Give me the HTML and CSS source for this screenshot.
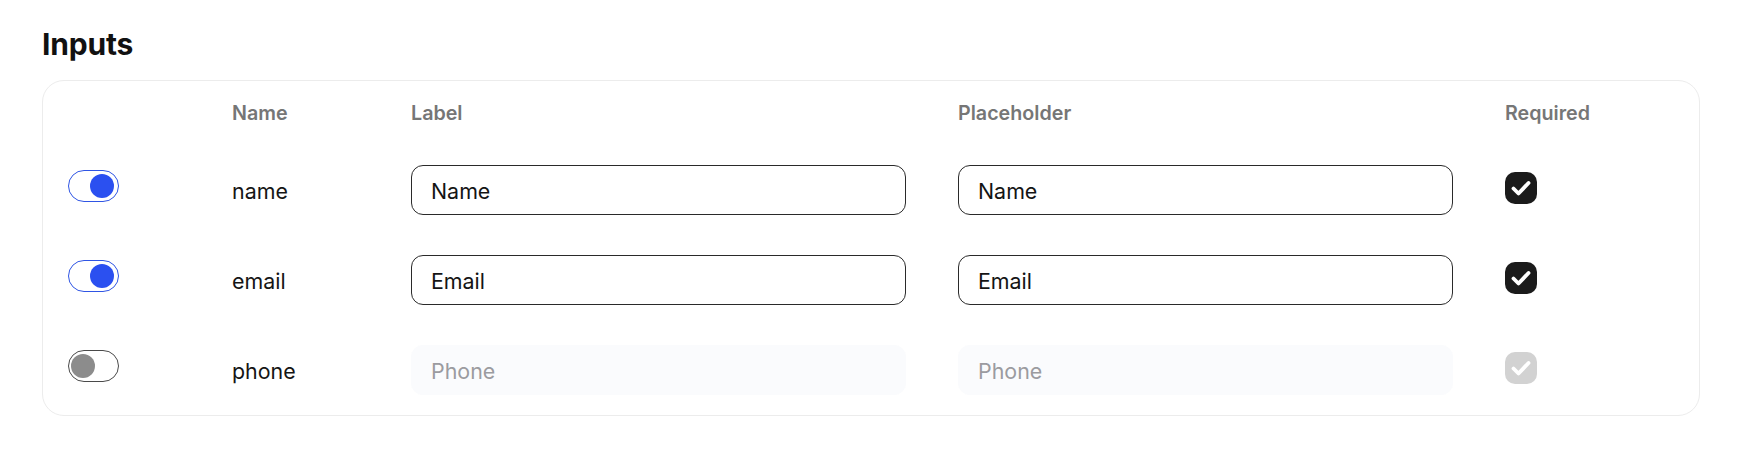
FILE: index.html
```html
<!DOCTYPE html>
<html lang="en">
<head>
<meta charset="utf-8">
<title>Inputs</title>
<link rel="stylesheet" href="styles.css">
</head>
<body>
<main class="page">
  <h1 class="title">Inputs</h1>
  <section class="card">
    <div class="table">
      <div class="th"></div>
      <div class="th">Name</div>
      <div class="th">Label</div>
      <div class="th">Placeholder</div>
      <div class="th">Required</div>

      <div class="cell"><span class="toggle on"><span class="knob"></span></span></div>
      <div class="cell field-name">name</div>
      <div class="cell"><input class="text-input" type="text" value="Name"></div>
      <div class="cell"><input class="text-input" type="text" value="Name"></div>
      <div class="cell"><span class="check">
        <svg viewBox="0 0 32 32" width="32" height="32"><path d="M8.5 16.5 L13.5 21.5 L23.5 11" fill="none" stroke="#fff" stroke-width="3.8" stroke-linecap="round" stroke-linejoin="round"/></svg>
      </span></div>

      <div class="cell"><span class="toggle on"><span class="knob"></span></span></div>
      <div class="cell field-name">email</div>
      <div class="cell"><input class="text-input" type="text" value="Email"></div>
      <div class="cell"><input class="text-input" type="text" value="Email"></div>
      <div class="cell"><span class="check">
        <svg viewBox="0 0 32 32" width="32" height="32"><path d="M8.5 16.5 L13.5 21.5 L23.5 11" fill="none" stroke="#fff" stroke-width="3.8" stroke-linecap="round" stroke-linejoin="round"/></svg>
      </span></div>

      <div class="cell"><span class="toggle off"><span class="knob"></span></span></div>
      <div class="cell field-name">phone</div>
      <div class="cell"><input class="text-input" type="text" value="Phone" disabled></div>
      <div class="cell"><input class="text-input" type="text" value="Phone" disabled></div>
      <div class="cell"><span class="check disabled">
        <svg viewBox="0 0 32 32" width="32" height="32"><path d="M8.5 16.5 L13.5 21.5 L23.5 11" fill="none" stroke="#fff" stroke-width="3.8" stroke-linecap="round" stroke-linejoin="round"/></svg>
      </span></div>
    </div>
  </section>
</main>
</body>
</html>
```

FILE: styles.css
```css
* {
  box-sizing: border-box;
}

html, body {
  margin: 0;
  padding: 0;
  background: #ffffff;
}

body {
  font-family: Inter, "Liberation Sans", sans-serif;
  color: #111111;
}

.page {
  padding: 26px 38px 0 42px;
}

.title {
  margin: 0 0 18px 0;
  font-size: 30px;
  line-height: 36px;
  font-weight: 700;
  color: #111111;
  letter-spacing: -0.2px;
}

.card {
  border: 1px solid #ececec;
  border-radius: 22px;
  padding: 21px 0 20px 25px;
}

.table {
  display: grid;
  grid-template-columns: 164px 179px 547px 547px 1fr;
  grid-template-rows: 23px 50px 50px 50px;
  row-gap: 40px;
}

.th {
  font-size: 19.7px;
  line-height: 23px;
  font-weight: 600;
  color: #767676;
}

.cell {
  display: flex;
  align-items: center;
  height: 50px;
}

.field-name {
  font-size: 21.4px;
  line-height: 24px;
  color: #151515;
  padding-top: 1px;
}

.toggle {
  position: relative;
  display: block;
  width: 51px;
  height: 32px;
  border-radius: 16px;
  background: #ffffff;
  margin-top: -9px;
}

.toggle.on {
  border: 1px solid #2f55e4;
}

.toggle.off {
  border: 1px solid #4a4a4a;
}

.knob {
  position: absolute;
  top: 3px;
  width: 24px;
  height: 24px;
  border-radius: 50%;
}

.toggle.on .knob {
  right: 4px;
  background: #2b50f0;
}

.toggle.off .knob {
  left: 2px;
  background: #8c8c8c;
}

.text-input {
  width: 495px;
  height: 50px;
  border: 1px solid #2a2a2a;
  border-radius: 12px;
  padding: 2px 0 0 19px;
  font-family: Inter, "Liberation Sans", sans-serif;
  font-size: 21.4px;
  color: #141414;
  background: #ffffff;
  outline: none;
}

.text-input:disabled {
  border-color: #fafbfd;
  background: #fafbfd;
  color: #9b9ba0;
}

.check {
  display: block;
  width: 32px;
  height: 32px;
  border-radius: 10px;
  background: #1b1b1b;
  margin-top: -5px;
}

.check svg {
  display: block;
}

.check.disabled {
  background: #d2d2d2;
}
```
